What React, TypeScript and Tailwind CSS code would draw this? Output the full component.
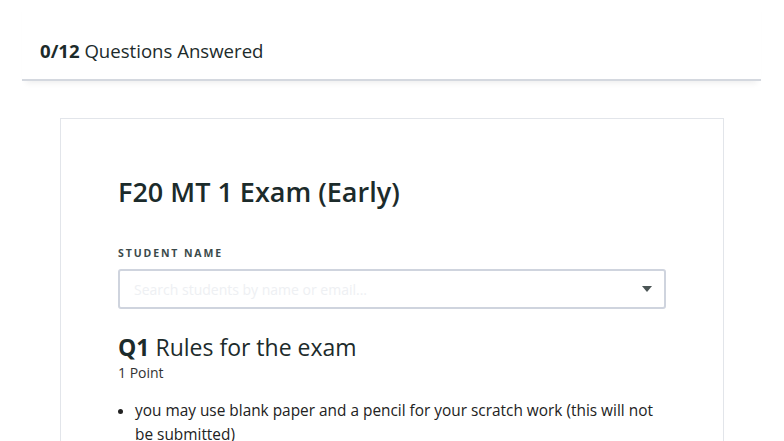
import React from "react";

export default function App() {
  return (
    <div className="w-full min-h-[441px] bg-white text-[#1c2b2b]" style={{ fontFamily: "'Open Sans', sans-serif" }}>
      <div className="ml-[22px] mr-[23px] h-[81px] flex items-end pb-[16px] pl-[18px] border-b-2 border-[#d4d8df] shadow-[0_6px_6px_-4px_rgba(0,0,0,0.07)]">
        <span className="text-[18.6px] leading-[24px]">
          <span className="font-bold">0/12</span> Questions Answered
        </span>
      </div>
      <div className="ml-[60px] w-[664px] mt-[37px] border border-[#e2e5ea] px-[57px] pt-[55px]">
        <h1 className="text-[27px] leading-[36px] font-semibold">F20 MT 1 Exam (Early)</h1>
        <div className="mt-[36px] text-[10.5px] leading-[14px] font-bold tracking-[0.18em] text-[#3b4a4a]">STUDENT NAME</div>
        <div className="mt-[9px] h-[40px] border-2 border-[#cfd4de] rounded-[3px] flex items-center justify-between pl-[14px] pr-[12px]">
          <span className="text-[14px] text-[#eef0f3]">Search students by name or email...</span>
          <svg width="10" height="6" viewBox="0 0 10 6"><path d="M0 0h10L5 6z" fill="#4b5555" /></svg>
        </div>
        <h2 className="mt-[23px] text-[23px] leading-[30px]">
          <span className="font-bold">Q1</span> Rules for the exam
        </h2>
        <div className="mt-[2px] text-[14px] leading-[18px] text-[#333]">1 Point</div>
        <ul className="mt-[17px] text-[15.4px] leading-[24px] text-[#222] list-disc pl-[17px]">
          <li>you may use blank paper and a pencil for your scratch work (this will not be submitted)</li>
        </ul>
      </div>
    </div>
  );
}
